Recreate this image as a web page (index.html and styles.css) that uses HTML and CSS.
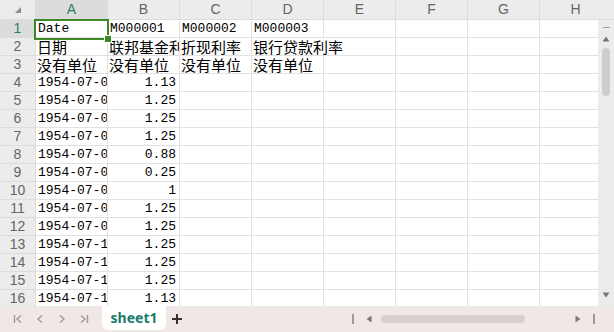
FILE: index.html
```html
<!DOCTYPE html>
<html>
<head>
    <title>sheet1</title>
    <link rel="stylesheet" href="styles.css">
</head>
<body>
    <div class="app">
        <div class="main">
            <div class="cells">
                <table class="grid">
                    <colgroup>
                        <col class="col-head">
                        <col><col><col><col><col><col><col><col>
                    </colgroup>
                    <tr class="head-row">
                        <th class="corner"><span class="corner-mark"></span></th>
                        <th class="active">A</th><th>B</th><th>C</th><th>D</th>
                        <th>E</th><th>F</th><th>G</th><th>H</th>
                    </tr>
                    <tr>
                        <th class="active">1</th>
                        <td>Date</td><td>M000001</td><td>M000002</td><td>M000003</td>
                        <td></td><td></td><td></td><td></td>
                    </tr>
                    <tr>
                        <th>2</th>
                        <td class="cn">日期</td><td class="cn">联邦基金利率</td><td class="cn">折现利率</td>
                        <td class="cn" colspan="2">银行贷款利率</td>
                        <td></td><td></td><td></td>
                    </tr>
                    <tr>
                        <th>3</th>
                        <td class="cn">没有单位</td><td class="cn">没有单位</td><td class="cn">没有单位</td><td class="cn">没有单位</td>
                        <td></td><td></td><td></td><td></td>
                    </tr>
                    <tr><th>4</th><td>1954-07-01</td><td class="num">1.13</td><td></td><td></td><td></td><td></td><td></td><td></td></tr>
                    <tr><th>5</th><td>1954-07-02</td><td class="num">1.25</td><td></td><td></td><td></td><td></td><td></td><td></td></tr>
                    <tr><th>6</th><td>1954-07-03</td><td class="num">1.25</td><td></td><td></td><td></td><td></td><td></td><td></td></tr>
                    <tr><th>7</th><td>1954-07-04</td><td class="num">1.25</td><td></td><td></td><td></td><td></td><td></td><td></td></tr>
                    <tr><th>8</th><td>1954-07-05</td><td class="num">0.88</td><td></td><td></td><td></td><td></td><td></td><td></td></tr>
                    <tr><th>9</th><td>1954-07-06</td><td class="num">0.25</td><td></td><td></td><td></td><td></td><td></td><td></td></tr>
                    <tr><th>10</th><td>1954-07-07</td><td class="num">1</td><td></td><td></td><td></td><td></td><td></td><td></td></tr>
                    <tr><th>11</th><td>1954-07-08</td><td class="num">1.25</td><td></td><td></td><td></td><td></td><td></td><td></td></tr>
                    <tr><th>12</th><td>1954-07-09</td><td class="num">1.25</td><td></td><td></td><td></td><td></td><td></td><td></td></tr>
                    <tr><th>13</th><td>1954-07-10</td><td class="num">1.25</td><td></td><td></td><td></td><td></td><td></td><td></td></tr>
                    <tr><th>14</th><td>1954-07-11</td><td class="num">1.25</td><td></td><td></td><td></td><td></td><td></td><td></td></tr>
                    <tr><th>15</th><td>1954-07-12</td><td class="num">1.25</td><td></td><td></td><td></td><td></td><td></td><td></td></tr>
                    <tr><th>16</th><td>1954-07-13</td><td class="num">1.13</td><td></td><td></td><td></td><td></td><td></td><td></td></tr>
                </table>
                <div class="selection"><span class="handle"></span></div>
            </div>
            <div class="vscroll">
                <div class="vscroll-cap"></div>
                <div class="vscroll-track">
                    <span class="dash"></span>
                    <svg class="arrow" width="8" height="6" viewBox="0 0 8 6"><path d="M4 0.5 L7.5 5.5 L0.5 5.5 Z" fill="#777"/></svg>
                    <span class="vthumb"></span>
                    <span class="spacer"></span>
                    <svg class="arrow" width="8" height="6" viewBox="0 0 8 6"><path d="M0.5 0.5 L7.5 0.5 L4 5.5 Z" fill="#777"/></svg>
                </div>
            </div>
        </div>
        <div class="tabbar">
            <div class="nav">
                <span class="nav-btn">
                    <svg width="12" height="12" viewBox="0 0 12 12"><path d="M2.5 2 V10 M9 2.5 L5 6 L9 9.5" fill="none" stroke="#9a9a9a" stroke-width="1.4"/></svg>
                </span>
                <span class="nav-btn">
                    <svg width="12" height="12" viewBox="0 0 12 12"><path d="M8 2.5 L4 6 L8 9.5" fill="none" stroke="#9a9a9a" stroke-width="1.4"/></svg>
                </span>
                <span class="nav-btn">
                    <svg width="12" height="12" viewBox="0 0 12 12"><path d="M4 2.5 L8 6 L4 9.5" fill="none" stroke="#9a9a9a" stroke-width="1.4"/></svg>
                </span>
                <span class="nav-btn">
                    <svg width="12" height="12" viewBox="0 0 12 12"><path d="M3 2.5 L7 6 L3 9.5 M9.5 2 V10" fill="none" stroke="#9a9a9a" stroke-width="1.4"/></svg>
                </span>
            </div>
            <div class="tab">sheet1</div>
            <div class="add">
                <svg width="12" height="12" viewBox="0 0 12 12"><path d="M6 1 V11 M1 6 H11" stroke="#333" stroke-width="2"/></svg>
            </div>
            <div class="hscroll">
                <span class="hbtn"><span class="bar"></span></span>
                <span class="hbtn">
                    <svg width="6" height="8" viewBox="0 0 6 8"><path d="M5.5 0.5 V7.5 L0.5 4 Z" fill="#777"/></svg>
                </span>
                <span class="htrack"><span class="hthumb"></span></span>
                <span class="hbtn">
                    <svg width="6" height="8" viewBox="0 0 6 8"><path d="M0.5 0.5 V7.5 L5.5 4 Z" fill="#777"/></svg>
                </span>
                <span class="hbtn"><span class="bar"></span></span>
            </div>
        </div>
    </div>
</body>
</html>
```

FILE: styles.css
```css
body {
    margin: 0;
    background-color: #ffffff;
    font-family: "Liberation Sans", Arial, sans-serif;
}
.app {
    width: 614px;
    height: 332px;
    display: flex;
    flex-direction: column;
    overflow: hidden;
}
.main {
    height: 306px;
    display: flex;
    overflow: hidden;
}
.cells {
    position: relative;
    width: 598px;
    overflow: hidden;
}
.grid {
    table-layout: fixed;
    width: 612px;
    border-collapse: separate;
    border-spacing: 0;
}
.grid col {
    width: 72px;
}
.grid col.col-head {
    width: 36px;
}
.grid th,
.grid td {
    box-sizing: border-box;
    height: 18px;
    padding: 0;
    vertical-align: middle;
    white-space: nowrap;
    overflow: hidden;
}
.grid th {
    background-color: #ececec;
    color: #666666;
    font-weight: normal;
    font-size: 14px;
    line-height: 17px;
    text-align: center;
    border-right: 1px solid #dcdcdc;
    border-bottom: 1px solid #dcdcdc;
}
.head-row th {
    height: 20px;
    line-height: 19px;
}
.grid th.active {
    background-color: #dcdcdc;
    color: #2a7d6b;
}
.corner-mark {
    display: inline-block;
    width: 0;
    height: 0;
    border-left: 6px solid transparent;
    border-bottom: 6px solid #8a8a8a;
    vertical-align: middle;
}
.grid td {
    font-family: "Liberation Mono", "Noto Sans CJK SC", monospace;
    font-size: 13px;
    line-height: 17px;
    color: #000000;
    padding-left: 2px;
    text-overflow: clip;
    border-right: 1px solid #e2e2e2;
    border-bottom: 1px solid #e2e2e2;
}
.grid td.cn {
    font-family: "Noto Sans CJK SC", sans-serif;
    font-size: 15px;
    padding-left: 1px;
}
.grid td.num {
    text-align: right;
    padding: 0 3px 0 0;
}
.selection {
    position: absolute;
    left: 34px;
    top: 19px;
    width: 71px;
    height: 17px;
    border: 2px solid #3b8a27;
}
.handle {
    position: absolute;
    right: -5px;
    bottom: -5px;
    width: 6px;
    height: 6px;
    background-color: #3b8a27;
    border: 1px solid #ffffff;
}
.vscroll {
    width: 16px;
    display: flex;
    flex-direction: column;
}
.vscroll-cap {
    height: 20px;
    background-color: #ececec;
    border-bottom: 1px solid #dcdcdc;
    box-sizing: border-box;
}
.vscroll-track {
    flex: 1;
    background-color: #ececec;
    display: flex;
    flex-direction: column;
    align-items: center;
    padding: 7px 0 8px;
}
.dash {
    width: 7px;
    height: 1px;
    background-color: #9a9a9a;
}
.arrow {
    margin-top: 8px;
}
.vthumb {
    margin-top: 6px;
    width: 8px;
    height: 48px;
    border-radius: 4px;
    background-color: #cdcdcd;
}
.spacer {
    flex: 1;
}
.tabbar {
    height: 26px;
    background-color: #efe8e6;
    display: flex;
    align-items: flex-start;
}
.nav {
    display: flex;
    padding-left: 7px;
    height: 26px;
    align-items: center;
}
.nav-btn {
    width: 22px;
    display: flex;
    justify-content: center;
}
.tab {
    margin-left: 7px;
    width: 64px;
    height: 24px;
    background-color: #ffffff;
    border-radius: 0 0 6px 6px;
    color: #1d7b6d;
    font-family: "Noto Sans", sans-serif;
    font-weight: bold;
    font-size: 14px;
    line-height: 23px;
    text-align: center;
}
.add {
    width: 22px;
    height: 26px;
    display: flex;
    justify-content: center;
    align-items: center;
}
.hscroll {
    margin-left: auto;
    padding-right: 12px;
    height: 26px;
    display: flex;
    align-items: center;
}
.hbtn {
    width: 16px;
    display: flex;
    justify-content: center;
    align-items: center;
}
.bar {
    width: 2px;
    height: 10px;
    background-color: #9a9a9a;
}
.htrack {
    width: 193px;
    display: flex;
}
.hthumb {
    margin-left: 4px;
    width: 144px;
    height: 8px;
    border-radius: 4px;
    background-color: #d6d1cf;
}
```
